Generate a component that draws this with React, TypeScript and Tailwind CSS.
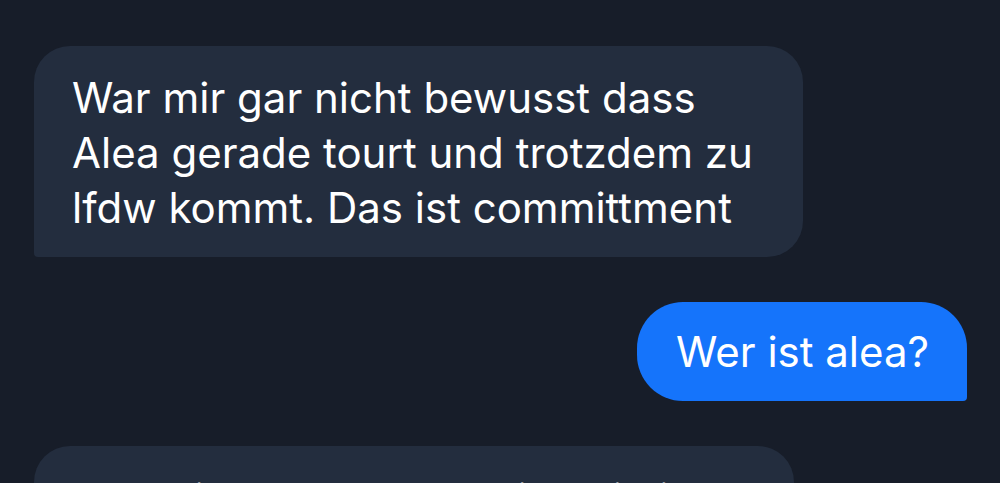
import React from 'react';

type Message = {
  id: number;
  text: string;
  mine?: boolean;
  width?: string;
  pad?: string;
};

const messages: Message[] = [
  {
    id: 1,
    text: 'War mir gar nicht bewusst dass Alea gerade tourt und trotzdem zu lfdw kommt. Das ist committment',
    width: 'w-[769px]',
    pad: 'pt-[24px] pb-[22px]',
  },
  { id: 2, text: 'Wer ist alea?', mine: true },
  {
    id: 3,
    text: 'ach, die kölner Sängerin? Sie ist toll und singt',
    width: 'w-[760px]',
    pad: 'pt-[25px] pb-[22px]',
  },
];

function Bubble({ text, mine, width, pad }: Message) {
  if (mine) {
    return (
      <div className="flex justify-end">
        <div className="bg-[#1574fb] text-white rounded-[46px] rounded-br-[4px] pl-[39px] pr-[38px] py-[22px] text-[42px] leading-[55px]">
          {text}
        </div>
      </div>
    );
  }
  return (
    <div className="flex justify-start">
      <div className={`${width} ${pad} bg-[#232d3e] text-white rounded-[36px] rounded-bl-[4px] px-[38px] text-[42px] leading-[55px]`}>
        {text}
      </div>
    </div>
  );
}

export default function App() {
  return (
    <div
      className="h-[483px] w-full overflow-hidden bg-[#171d29] pt-[46px] pl-[34px] pr-[33px] flex flex-col gap-[45px]"
      style={{ fontFamily: 'Inter, "Noto Sans", sans-serif' }}
    >
      {messages.map((m) => (
        <Bubble key={m.id} {...m} />
      ))}
    </div>
  );
}
